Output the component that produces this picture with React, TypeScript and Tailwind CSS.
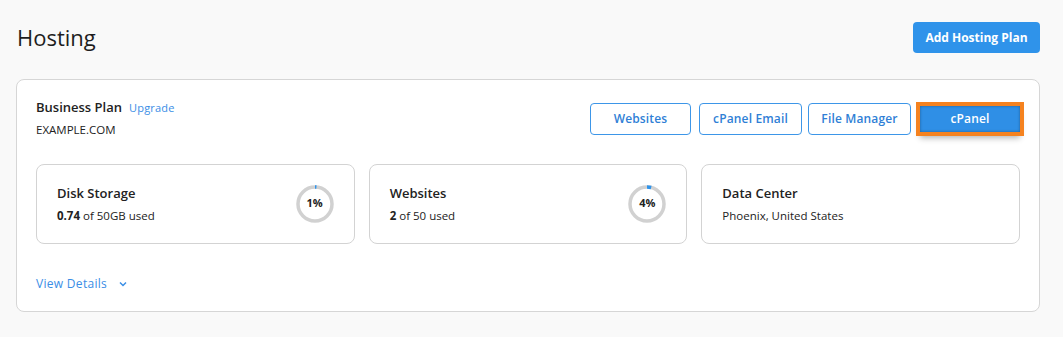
import React from "react";

const font = { fontFamily: '"Open Sans", "Noto Sans", sans-serif' };

function Ring({ pct }: { pct: number }) {
  const r = 17;
  const c = 2 * Math.PI * r;
  const len = Math.max((pct / 100) * c, 1.5);
  return (
    <div className="relative w-[38px] h-[38px]">
      <svg width="38" height="38" viewBox="0 0 38 38" className="-rotate-90">
        <circle cx="19" cy="19" r={r} fill="none" stroke="#d1d1d1" strokeWidth="3.5" />
        <circle
          cx="19"
          cy="19"
          r={r}
          fill="none"
          stroke="#2f93ea"
          strokeWidth="3.5"
          strokeDasharray={`${len} ${c}`}
        />
      </svg>
      <div className="absolute inset-0 flex items-center justify-center text-[11px] font-bold text-[#222]">
        {pct}%
      </div>
    </div>
  );
}

function Stat({
  title,
  sub,
  pct,
}: {
  title: string;
  sub: React.ReactNode;
  pct?: number;
}) {
  return (
    <div className="h-[80px] rounded-lg border border-[#d3d3d3] bg-white pl-5 pr-5 flex items-center justify-between">
      <div>
        <div className="text-[13px] leading-[18px] font-semibold text-[#222]">{title}</div>
        <div className="mt-[6px] text-[11.5px] leading-4 text-[#222]">{sub}</div>
      </div>
      {pct !== undefined && <Ring pct={pct} />}
    </div>
  );
}

export default function App() {
  return (
    <div className="min-h-[337px] bg-[#f9f9f9] pl-4 pr-[23px] pt-[22px] pb-[26px]" style={font}>
      <div className="flex items-center justify-between h-[31px]">
        <h1 className="text-[22px] leading-[31px] font-normal text-[#1e1e1e] pl-px">Hosting</h1>
        <button className="h-[31px] w-[127px] rounded bg-[#2f93ea] text-white text-[12px] font-bold">
          Add Hosting Plan
        </button>
      </div>

      <div className="mt-[26px] rounded-lg border border-[#d6d6d6] bg-white px-[19px] pt-[18px] pb-[19px]">
        <div className="flex items-start justify-between">
          <div>
            <div className="flex items-baseline">
              <span className="text-[13px] leading-[18px] font-semibold text-[#222]">Business Plan</span>
              <span className="ml-[7px] text-[11px] text-[#3a8ee6] tracking-[0.2px]">Upgrade</span>
            </div>
            <div className="mt-[5px] text-[11.5px] leading-4 text-[#222]">EXAMPLE.COM</div>
          </div>
          <div className="mt-[5px] flex items-center">
            <button className="h-8 w-[101px] rounded border border-[#3d96e8] bg-white text-[12px] font-semibold tracking-[0.15px] text-[#2f7fd6]">
              Websites
            </button>
            <button className="ml-[8px] h-8 w-[103px] rounded border border-[#3d96e8] bg-white text-[12px] font-semibold tracking-[0.15px] text-[#2f7fd6]">
              cPanel Email
            </button>
            <button className="ml-[6px] h-8 w-[103px] rounded border border-[#3d96e8] bg-white text-[12px] font-semibold tracking-[0.15px] text-[#2f7fd6]">
              File Manager
            </button>
            <button className="ml-[9px] block h-[26px] w-[100px] bg-[#2f8fe6] text-white text-[12px] font-semibold tracking-[0.15px] outline-[4px] outline-solid outline-[#f5821f] shadow-[inset_0_0_3px_rgba(0,0,0,0.35),0_6px_6px_rgba(0,0,0,0.3)]">
              cPanel
            </button>
          </div>
        </div>

        <div className="mt-[26px] grid grid-cols-3 gap-[14px]">
          <Stat
            title="Disk Storage"
            sub={
              <>
                <span className="font-bold">0.74</span> of 50GB used
              </>
            }
            pct={1}
          />
          <Stat
            title="Websites"
            sub={
              <>
                <span className="font-bold">2</span> of 50 used
              </>
            }
            pct={4}
          />
          <Stat title="Data Center" sub="Phoenix, United States" />
        </div>

        <div className="mt-[32px] flex items-center text-[12px] leading-4 text-[#3a8ee6] tracking-[0.3px]">
          <span>View Details</span>
          <svg className="ml-[12px]" width="8" height="6" viewBox="0 0 8 6" fill="none">
            <path d="M1 1.5 L4 4.5 L7 1.5" stroke="#3a8ee6" strokeWidth="1.5" />
          </svg>
        </div>
      </div>
    </div>
  );
}
